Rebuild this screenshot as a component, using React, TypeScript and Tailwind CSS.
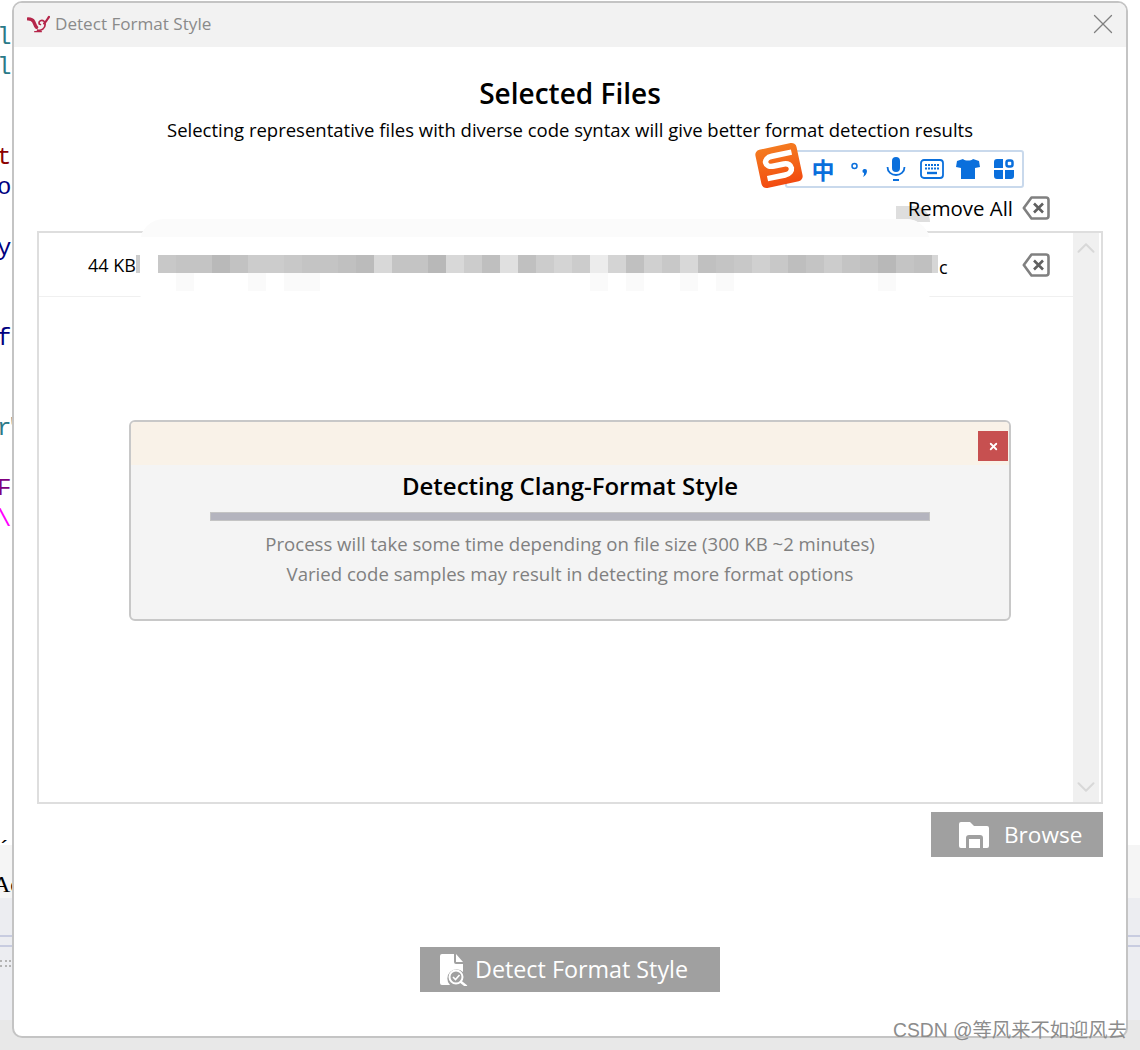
import { X, ChevronUp, ChevronDown } from 'lucide-react';

// editor text peeking out behind the dialog, one entry per 30px line
const codeLines = [
  { text: 'l', color: 'text-[#2b7a88]' },
  { text: 'l-', color: 'text-[#2b7a88] tracking-[-3px]' },
  { text: '', color: '' },
  { text: '', color: '' },
  { text: 't', color: 'text-[#8b0000]' },
  { text: 'o', color: 'text-[#000080]' },
  { text: '', color: '' },
  { text: 'y', color: 'text-[#000080]' },
  { text: '', color: '' },
  { text: '', color: '' },
  { text: 'f-', color: 'text-[#000080] tracking-[-3px]' },
  { text: '', color: '' },
  { text: '', color: '' },
  { text: "r'", color: 'text-[#2b7a88] tracking-[-6px]' },
  { text: '', color: '' },
  { text: 'F', color: 'text-[#800080]' },
  { text: '\\', color: 'text-[#ff00ff]' },
  ...Array.from({ length: 10 }, () => ({ text: '', color: '' })),
  { text: '´', color: 'text-black' },
];

const mosaic = [
  'bg-[#c8c8c8]', 'bg-[#c4c4c4]', 'bg-[#c4c4c4]', 'bg-[#b9b9b9]', 'bg-[#c2c2c2]', 'bg-[#cccccc]', 'bg-[#cccccc]', 'bg-[#c8c8c8]',
  'bg-[#c4c4c4]', 'bg-[#c4c4c4]', 'bg-[#c0c0c0]', 'bg-[#bbbbbb]', 'bg-[#d8d8d8]', 'bg-[#c4c4c4]', 'bg-[#c4c4c4]', 'bg-[#b8b8b8]',
  'bg-[#d8d8d8]', 'bg-[#cccccc]', 'bg-[#bfbfbf]', 'bg-[#e0e0e0]', 'bg-[#c0c0c0]', 'bg-[#cccccc]', 'bg-[#d4d4d4]', 'bg-[#cccccc]',
  'bg-[#ececec]', 'bg-[#d4d4d4]', 'bg-[#c0c0c0]', 'bg-[#d0d0d0]', 'bg-[#c8c8c8]', 'bg-[#d8d8d8]', 'bg-[#c0c0c0]', 'bg-[#c4c4c4]',
  'bg-[#c8c8c8]', 'bg-[#d0d0d0]', 'bg-[#c8c8c8]', 'bg-[#bebebe]', 'bg-[#c4c4c4]', 'bg-[#cccccc]', 'bg-[#c4c4c4]', 'bg-[#c0c0c0]',
  'bg-[#b8b8b8]', 'bg-[#c4c4c4]', 'bg-[#c0c0c0]',
];

const mosaicLight = [1, 5, 7, 8, 24, 26, 29, 31, 40];

function ModuleLogo() {
  return (
    <svg viewBox="0 0 24 20" className="w-[23px] h-[19px]">
      <g fill="none" stroke="#b5264a" strokeLinecap="round">
        <path d="M1 4c2 0 5 1 6 3s1 4 3 6" strokeWidth="3.500" />
        <path d="M11 16c4 1 8-2 8-6 0-3-2-5-5-4-2 1-2 4 0 4" strokeWidth="1.800" />
        <path d="M18 9c2-2 3-4 5-7" strokeWidth="2.400" />
        <path d="M8 17.500h7" strokeWidth="1.400" />
      </g>
    </svg>
  );
}

function RemoveIcon() {
  return (
    <svg viewBox="0 0 28 24" className="w-[28px] h-[24px]">
      <path
        d="M9.500 1.500H24a2.500 2.500 0 0 1 2.500 2.500v16a2.500 2.500 0 0 1-2.500 2.500H9.500L1.800 12z"
        fill="none"
        stroke="#808080"
        strokeWidth="2.600"
        strokeLinejoin="round"
      />
      <path d="M12 7.500l9 9M21 7.500l-9 9" stroke="#606060" strokeWidth="2.600" />
    </svg>
  );
}

function FolderIcon() {
  return (
    <svg viewBox="0 0 30 26" className="w-[30px] h-[26px]">
      <path
        fillRule="evenodd"
        fill="#fff"
        d="M2 0h9l4 4h13a2 2 0 0 1 2 2v18a2 2 0 0 1-2 2h-4V16a3 3 0 0 0-3-3H10a3 3 0 0 0-3 3v10H2a2 2 0 0 1-2-2V2a2 2 0 0 1 2-2z"
      />
      <rect x="10" y="17" width="11" height="9" fill="#fff" />
    </svg>
  );
}

function DetectIcon() {
  return (
    <svg viewBox="0 0 28 32" className="w-[28px] h-[32px]">
      <path fill="#fff" d="M2 0h12v8a2 2 0 0 0 2 2h7v8a9 9 0 0 0-13 13H2a2 2 0 0 1-2-2V2a2 2 0 0 1 2-2z" />
      <path fill="#fff" d="M16 0l7 8h-7z" />
      <circle cx="16" cy="23" r="6.500" fill="none" stroke="#fff" strokeWidth="2" />
      <path d="M13 23l2.500 2.500 4-4.500" fill="none" stroke="#fff" strokeWidth="1.600" />
      <path d="M21 28l5 4" stroke="#fff" strokeWidth="2.400" strokeLinecap="round" />
    </svg>
  );
}

function ImeBar() {
  return (
    <div className="absolute left-[785px] top-[150px] w-[239px] h-[38px] bg-white border-2 border-[#c9d9ec] rounded-[3px] flex items-center pl-[24px] text-[#0a6fdc]">
      <span className="w-[24px] text-center text-[23px] leading-none font-bold font-['Noto_Sans_CJK_SC',sans-serif]">中</span>
      <svg viewBox="0 0 20 20" className="ml-[15px] w-[20px] h-[20px]">
        <circle cx="4.500" cy="7" r="2.500" fill="none" stroke="currentColor" strokeWidth="1.500" />
        <path d="M15 10a2 2 0 0 1 2 2c0 3-2 5-4 6 1-2 1-3 1-4a2 2 0 0 1 1-4z" fill="currentColor" />
      </svg>
      <svg viewBox="0 0 20 24" className="ml-[16px] w-[20px] h-[24px]">
        <rect x="6" y="0" width="8" height="15" rx="4" fill="currentColor" />
        <path d="M1.500 10c0 5 4 8 8.500 8s8.500-3 8.500-8" fill="none" stroke="currentColor" strokeWidth="1.800" />
        <path d="M7 23h6" stroke="currentColor" strokeWidth="2" />
      </svg>
      <svg viewBox="0 0 24 20" className="ml-[14px] w-[24px] h-[20px]">
        <rect x="1" y="1" width="22" height="18" rx="3" fill="none" stroke="currentColor" strokeWidth="1.800" />
        <path d="M5 6h14M5 9.500h14" stroke="currentColor" strokeWidth="2" strokeDasharray="2 1" />
        <path d="M7 14h10" stroke="currentColor" strokeWidth="2.400" />
      </svg>
      <svg viewBox="0 0 24 20" className="ml-[12px] w-[24px] h-[20px]">
        <path fill="currentColor" d="M7 0c2 2 8 2 10 0l6 2 1 6-5 1v11H5V9L0 8l1-6z" />
      </svg>
      <svg viewBox="0 0 20 20" className="ml-[14px] w-[20px] h-[20px]">
        <path fill="currentColor" d="M3 0h6v9H0V3a3 3 0 0 1 3-3zM0 11h9v9H3a3 3 0 0 1-3-3zM11 11h9v6a3 3 0 0 1-3 3h-6z" />
        <rect x="12.500" y="1.500" width="6" height="6" rx="2" fill="none" stroke="currentColor" strokeWidth="2.500" />
      </svg>
    </div>
  );
}

function ImeLogo() {
  return (
    <div className="absolute left-[758px] top-[146px] w-[42px] h-[39px] bg-linear-to-b from-[#f47a20] to-[#f24a10] rounded-[5px] -rotate-12 flex items-center justify-center">
      <svg viewBox="0 0 42 39" className="w-[42px] h-[39px]">
        <path d="M36 9H16C6 9 6 19 16 19h10c9 0 9 11-1 11H7" fill="none" stroke="#fff" strokeWidth="5.500" />
      </svg>
    </div>
  );
}

function ProgressDialog() {
  return (
    <div className="absolute left-[129px] top-[420px] w-[882px] h-[201px] border-2 border-[#c8c8c8] rounded-[6px] bg-[#f4f4f4] overflow-hidden">
      <div className="h-[43px] bg-[#f9f2e8] flex justify-end items-start pt-[9px] pr-[1px]">
        <div className="w-[30px] h-[30px] bg-[#c75050] flex items-center justify-center">
          <X size={11} color="#fff" strokeWidth={4} />
        </div>
      </div>
      <div className="flex flex-col items-center">
        <h3 className="mt-[1px] text-[24px] leading-[40px] font-semibold text-black">Detecting Clang-Format Style</h3>
        <div className="mt-[6px] w-[720px] h-[9px] bg-[#b4b4be] border border-[#c4c4c4]" />
        <p className="mt-[8px] text-[18.6px] leading-[30px] text-[#808080]">Process will take some time depending on file size (300 KB ~2 minutes)</p>
        <p className="text-[18.6px] leading-[30px] text-[#808080]">Varied code samples may result in detecting more format options</p>
      </div>
    </div>
  );
}

function BlurredName() {
  return (
    <>
      <div className="absolute left-[140px] top-[219px] w-[790px] h-[86px] bg-white rounded-t-[24px] rounded-b-[12px] overflow-hidden">
        <div className="h-[18px] bg-[#fbfbfb]" />
      </div>
      <div className="absolute left-[136px] top-[255px] w-[4px] h-[18px] bg-[#cccccc]" />
      <div className="absolute left-[158px] top-[255px] flex">
        {mosaic.map((shade, i) => (
          <div key={i} className={`w-[18px] h-[18px] ${shade}`} />
        ))}
        <div className="w-[6px] h-[18px] bg-[#d6d6d6]" />
      </div>
      <div className="absolute left-[158px] top-[273px] flex">
        {mosaic.map((_, i) => (
          <div key={i} className={`w-[18px] h-[18px] ${mosaicLight.includes(i) ? 'bg-[#fafafa]' : 'bg-white'}`} />
        ))}
      </div>
      <span className="absolute left-[939px] top-[253px] text-[18px] leading-[28px] text-black">c</span>
    </>
  );
}

export default function App() {
  return (
    <div className="relative w-[1140px] h-[1050px] overflow-hidden bg-white font-['Open_Sans',sans-serif]">
      {/* editor behind the dialog */}
      <div className="flex flex-col h-full">
        <div className="h-[845px] pt-[23px] overflow-hidden font-['Liberation_Mono',monospace] text-[24px]">
          {codeLines.map((line, i) => (
            <div key={i} className={`h-[30.100px] leading-[30px] -ml-[3px] ${line.color}`}>{line.text}</div>
          ))}
        </div>
        <div className="h-[53px] bg-[#f5f5f5] pt-[24px] font-['Liberation_Serif',serif] text-[24px] leading-[30px] text-black">
          <span className="-ml-[7px]">Ac</span>
        </div>
        <div className="h-[122px] bg-[#ecedf1] pt-[37px]">
          <div className="h-[12px] border-y-2 border-[#c8cce0]" />
          <div className="mt-[13px] w-[11px] h-[7px] border-y-2 border-dotted border-[#b4b4b4]" />
        </div>
        <div className="flex-1 bg-[#e8e8e8]" />
      </div>

      {/* main dialog */}
      <div className="absolute left-[12px] top-[1px] w-[1116px] h-[1037px] bg-white border-2 border-[#c4c4c4] rounded-[10px] overflow-hidden flex flex-col">
        <div className="h-[44px] bg-[#f2f2f2] flex items-center pl-[13px] pr-[6px] pb-[2px]">
          <ModuleLogo />
          <span className="ml-[5px] text-[17.1px] text-[#8a8a8a]">Detect Format Style</span>
          <X className="ml-auto" size={34} color="#808080" strokeWidth={0.9} />
        </div>
        <div className="flex-1 flex flex-col px-[23px]">
          <h2 className="mt-[28px] text-center text-[28px] leading-[36px] font-semibold text-black">Selected Files</h2>
          <p className="mt-[5px] text-center text-[18.5px] leading-[28px] text-black">Selecting representative files with diverse code syntax will give better format detection results</p>
          <div className="mt-[49px] h-[30px] flex items-center justify-end gap-[9px] pr-[53px] text-[20.4px] text-black">
            <span className="relative leading-[30px]">
              <span className="absolute -left-[12px] top-[13px] w-[34px] h-[16px] bg-[#dedede] rounded-tr-[24px]" />
              <span className="relative">Remove All</span>
            </span>
            <RemoveIcon />
          </div>
          <div className="mt-[8px] h-[573px] border-2 border-[#dedede] flex">
            <div className="flex-1 min-w-0">
              <div className="h-[64px] border-b border-[#f0f0f0] flex items-center pl-[49px] pr-[23px] justify-between">
                <span className="mt-[2px] text-[18px] text-black">44 KB</span>
                <RemoveIcon />
              </div>
            </div>
            <div className="w-[26px] mr-[2px] bg-[#f0f0f0] flex flex-col justify-between items-center">
              <ChevronUp size={30} color="#d8d8d8" strokeWidth={1.6} />
              <ChevronDown size={30} color="#d8d8d8" strokeWidth={1.6} />
            </div>
          </div>
          <button className="mt-[8px] self-end w-[172px] h-[45px] bg-[#a0a0a0] flex items-center pl-[28px] gap-[15px] text-[22.6px] text-white">
            <FolderIcon />
            Browse
          </button>
          <button className="mt-[90px] self-center w-[300px] h-[45px] bg-[#a0a0a0] flex items-center pl-[20px] gap-[7px] text-[23.3px] text-white">
            <DetectIcon />
            Detect Format Style
          </button>
        </div>
      </div>

      <BlurredName />
      <ImeBar />
      <ImeLogo />
      <ProgressDialog />

      <span className="absolute left-[893px] top-[1017px] text-[19.3px] leading-[28px] text-[#8c8c8c] font-['Liberation_Sans','Noto_Sans_CJK_SC',sans-serif]">CSDN @等风来不如迎风去</span>
    </div>
  );
}
